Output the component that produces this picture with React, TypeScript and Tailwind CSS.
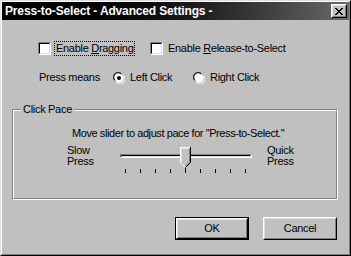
import type { ReactNode } from 'react';

const font = { fontFamily: '"Liberation Sans", Arial, sans-serif' };

function CheckBox({ label, focused }: { label: ReactNode; focused?: boolean }) {
  return (
    <div className="flex items-center">
      <div className="w-[13px] h-[13px] border border-t-[#808080] border-l-[#808080] border-b-white border-r-white">
        <div className="w-full h-full bg-white border border-t-black border-l-black border-b-[#dfdfdf] border-r-[#dfdfdf]" />
      </div>
      <span
        className={`ml-[3px] px-[1px] leading-[13px] border border-dotted ${focused ? 'border-black' : 'border-transparent'}`}
      >
        {label}
      </span>
    </div>
  );
}

function Radio({ label, checked }: { label: string; checked?: boolean }) {
  return (
    <div className="flex items-center">
      <svg width="12" height="12" viewBox="0 0 12 12" className="shrink-0">
        <path d="M1 8 A5 5 0 0 1 8 1" stroke="#808080" strokeWidth="1" fill="none" />
        <circle cx="6" cy="6" r="4.5" fill="white" />
        <path d="M2 8.5 A4 4 0 0 1 8.5 2" stroke="#000" strokeWidth="1" fill="none" />
        <path d="M4 11 A5 5 0 0 0 11 4" stroke="#fff" strokeWidth="1" fill="none" />
        <path d="M3.5 10 A4 4 0 0 0 10 3.5" stroke="#dfdfdf" strokeWidth="1" fill="none" />
        {checked && <circle cx="6" cy="6" r="2" fill="#000" />}
      </svg>
      <span className="ml-[5px] leading-[13px]">{label}</span>
    </div>
  );
}

function Button({ children, isDefault }: { children: ReactNode; isDefault?: boolean }) {
  return (
    <div className={`w-[74px] h-[23px] ${isDefault ? 'border border-black' : ''}`}>
      <div className="w-full h-full border border-t-white border-l-white border-b-black border-r-black">
        <div className="w-full h-full flex items-center justify-center border border-t-[#dfdfdf] border-l-[#dfdfdf] border-b-[#808080] border-r-[#808080]">
          {children}
        </div>
      </div>
    </div>
  );
}

const ticks = [0, 1, 2, 3, 4, 5, 6, 7, 8];

export default function App() {
  return (
    <div className="w-[351px] h-[256px] bg-[#c0c0c0] text-[11px] tracking-[-0.3px] text-black" style={font}>
      <div className="w-full h-full border border-t-[#dfdfdf] border-l-[#dfdfdf] border-b-black border-r-black">
        <div className="w-full h-full border border-t-white border-l-white border-b-[#808080] border-r-[#808080] flex flex-col">
          <div className="h-[18px] flex items-center justify-between bg-gradient-to-r from-black via-[#141414] to-[#6a6a6a] pl-[3px] pr-[2px]">
            <span className="text-white font-bold text-[12px] tracking-[-0.15px] leading-[18px]">Press-to-Select - Advanced Settings -</span>
            <div className="w-[16px] h-[14px] bg-[#c0c0c0] border border-t-white border-l-white border-b-black border-r-black">
              <div className="w-full h-full flex items-center justify-center border border-t-[#dfdfdf] border-l-[#dfdfdf] border-b-[#808080] border-r-[#808080]">
                <svg width="8" height="7" viewBox="0 0 8 7">
                  <path d="M0 0h2v1h1v1h2V1h1V0h2v1H7v1H6v1H5v1h1v1h1v1h1v1H6V6H5V5H3v1H2v1H0V6h1V5h1V4h1V3H2V2H1V1H0z" fill="#000" />
                </svg>
              </div>
            </div>
          </div>

          <div className="flex mt-[21px] pl-[36px] h-[15px] items-center">
            <div className="w-[112px]">
              <CheckBox focused label={<>Enable <u>D</u>ragging</>} />
            </div>
            <CheckBox label={<>Enable <u>R</u>elease-to-Select</>} />
          </div>

          <div className="flex mt-[14px] pl-[37px] h-[15px] items-center">
            <span className="w-[74px] leading-[13px]">Press means</span>
            <div className="w-[80px]">
              <Radio checked label="Left Click" />
            </div>
            <Radio label="Right Click" />
          </div>

          <div className="relative mt-[24px] ml-[10px] w-[326px] h-[91px] border border-t-[#808080] border-l-[#808080] border-b-white border-r-white">
            <div className="w-full h-full border border-t-white border-l-white border-b-[#808080] border-r-[#808080] flex flex-col">
              <span className="absolute -top-[7px] left-[8px] bg-[#c0c0c0] px-[2px] leading-[13px]">Click Pace</span>
              <div className="mt-[16px] pl-[58px] leading-[13px] tracking-[-0.42px]">Move slider to adjust pace for "Press-to-Select."</div>
              <div className="flex mt-[5px]">
                <div className="ml-[53px] w-[50px] leading-[11px]">
                  <div>Slow</div>
                  <div>Press</div>
                </div>
                <div className="relative w-[136px] h-[30px] ml-[2px]">
                  <div className="absolute left-[1px] top-[9px] w-[132px] h-[4px] border border-t-[#808080] border-l-[#808080] border-b-white border-r-white">
                    <div className="w-full h-full border border-t-black border-l-black border-b-[#dfdfdf] border-r-[#dfdfdf]" />
                  </div>
                  <svg className="absolute left-[61px] top-[2px]" width="11" height="21" viewBox="0 0 11 21">
                    <path d="M0 0H11V15.5L5.5 21L0 15.5Z" fill="#c0c0c0" />
                    <path d="M0.5 15.5V0.5H10" stroke="#fff" fill="none" />
                    <path d="M1.5 15V1.5H9" stroke="#dfdfdf" fill="none" />
                    <path d="M10.5 0V15.5L5.5 20.5" stroke="#000" fill="none" />
                    <path d="M9.5 1.5V15L5.5 19" stroke="#808080" fill="none" />
                    <path d="M0.5 15.5L5 20" stroke="#fff" fill="none" />
                  </svg>
                  {ticks.map((i) => (
                    <div
                      key={i}
                      className="absolute w-[1px] bg-black"
                      style={{ left: 6 + i * 15, top: i === 4 ? 23 : 24, height: i === 4 ? 5 : 4 }}
                    />
                  ))}
                </div>
                <div className="ml-[12px] leading-[11px]">
                  <div>Quick</div>
                  <div>Press</div>
                </div>
              </div>
            </div>
          </div>

          <div className="flex mt-[17px] pl-[173px] gap-[14px]">
            <Button isDefault>OK</Button>
            <Button>Cancel</Button>
          </div>
        </div>
      </div>
    </div>
  );
}
